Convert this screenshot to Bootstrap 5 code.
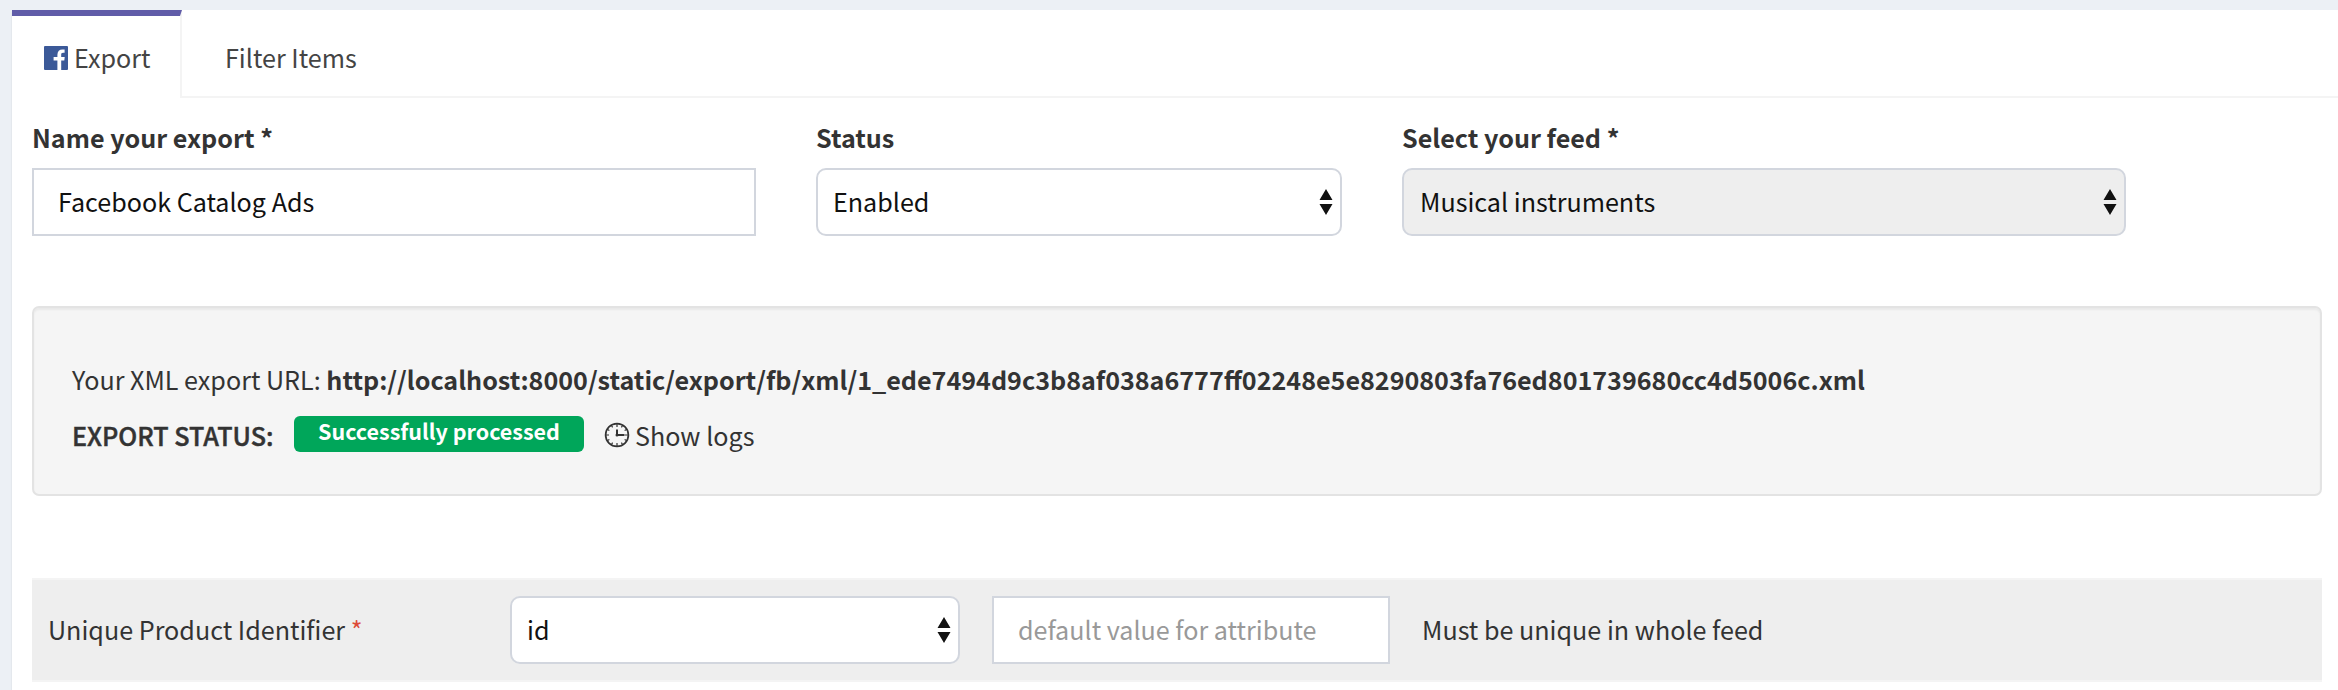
<!DOCTYPE html>
<html lang="en">
<head>
<meta charset="utf-8">
<title>Export</title>
<link href="https://cdn.jsdelivr.net/npm/bootstrap@5.3.0/dist/css/bootstrap.min.css" rel="stylesheet">
<style>
body{background:#ecf0f5;color:#333;font-family:"Noto Sans CJK SC",sans-serif;font-size:25.14px;line-height:40px;overflow:hidden}
.panel{margin:10px 0 0 12px;height:700px;background:#fff;box-shadow:0 2px 2px rgba(0,0,0,.1)}
.export-tabs{height:88px;border-bottom:2px solid #f4f4f4}
.export-tabs .nav-link{height:88px;color:#444;border:0;border-top:6px solid transparent;border-radius:0;padding:21px 32px 0;line-height:40px}
.export-tabs .nav-link.active{width:170px;border-top-color:#605ca8;border-right:2px solid #f4f4f4;background:#fff;padding:21px 0 0 32px}
.export-tabs .filter-tab{padding-left:43px}
.tab-label{height:40px}
.fb-icon{width:24px;height:24px;margin-right:6px;margin-top:1px}
.panel-body{padding:19px 16px 0 20px}
.form-label{display:block;margin:0 0 11px;font-weight:700}
.form-control,.form-select{height:68px;border:2px solid #d2d6de;color:#111;font-size:inherit;line-height:40px;box-shadow:none}
.form-control{border-radius:0;padding:11px 24px 13px}
.form-control::placeholder{color:#999;opacity:1}
.form-select{border-radius:10px;padding:11px 40px 13px 15px;background:#fff url("data:image/svg+xml,%3Csvg xmlns='http://www.w3.org/2000/svg' width='14' height='26'%3E%3Cpath d='M7 0l6.5 11H.5zM.5 15h13L7 26z' fill='%23111'/%3E%3C/svg%3E") no-repeat right 7px center/14px 26px}
.form-select:disabled{background-color:#eee;color:#111;opacity:1;padding-left:16px}
.fields{gap:60px}
.w-name{width:724px}.w-status{width:526px}
.url-well{margin-top:70px;height:190px;padding:51px 38px 0;background:#f5f5f5;border:2px solid #e3e3e3;border-radius:7px;box-shadow:inset 0 2px 2px rgba(0,0,0,.05)}
.status-row{margin-top:16px}
.status-title{font-weight:500;-webkit-text-stroke:.45px #333;width:222px}
.status-badge{width:290px;height:36px;margin-top:-3px;padding:0;border-radius:6px;background:#00a65a;font-size:21.5px;font-weight:700;line-height:30px;color:#fff}
.clock{width:26px;height:26px;margin:0 5px 0 20px}
.attr-row{margin-top:82px;height:104px;background:#eee;border-top:2px solid #f4f4f4;border-bottom:2px solid #f4f4f4}
.attr-text{padding-bottom:2px}
.attr-name{width:478px;padding-left:16px}
.w-attr{width:450px}.w-default{width:398px;margin:0 32px}
.req{color:#dd4b39}
</style>
</head>
<body>
<main class="panel">
  <nav class="nav export-tabs flex-nowrap">
    <a class="nav-link active d-flex text-nowrap" href="#"><span class="tab-label d-flex align-items-center"><svg class="fb-icon" viewBox="0 0 24 24"><rect width="24" height="24" rx="1" fill="#3b5998"/><path d="M13.4 24v-9.4H9.6V11h3.800V8.700c0-3.500 2-5.200 5-5.200h2.200v3.200h-1.500c-1.500 0-1.900.7-1.900 1.900V11h3.500l-.4 3.600h-3.100V24z" fill="#fff"/></svg>Export</span></a>
    <a class="nav-link filter-tab" href="#">Filter Items</a>
  </nav>
  <div class="panel-body">
    <div class="d-flex fields">
      <div class="w-name"><label class="form-label" for="name">Name your export *</label><input id="name" class="form-control" value="Facebook Catalog Ads"></div>
      <div class="w-status"><label class="form-label" for="status">Status</label><select id="status" class="form-select"><option>Enabled</option></select></div>
      <div class="w-name"><label class="form-label" for="feed">Select your feed *</label><select id="feed" class="form-select" disabled><option>Musical instruments</option></select></div>
    </div>
    <section class="url-well">
      <div class="text-nowrap">Your XML export URL: <b>http://localhost:8000/static/export/fb/xml/1_ede7494d9c3b8af038a6777ff02248e5e8290803fa76ed801739680cc4d5006c.xml</b></div>
      <div class="status-row d-flex align-items-center">
        <span class="status-title text-nowrap">EXPORT STATUS:</span>
        <span class="badge status-badge">Successfully processed</span>
        <svg class="clock" viewBox="0 0 26 26" fill="none" stroke="#333"><circle cx="13" cy="13" r="11.4" stroke-width="1.7"/><path d="M13 7.5V13h7.5" stroke-width="2"/><circle cx="13" cy="13" r="1.5" fill="#333" stroke="none"/><g stroke-width="1.2"><path d="M13 2v3M13 21v3M2 13h3M21 13h3"/><path d="M13 2v2.2M13 21.8V24M2 13h2.2M21.8 13H24" transform="rotate(30 13 13)"/><path d="M13 2v2.2M13 21.8V24M2 13h2.2M21.8 13H24" transform="rotate(60 13 13)"/></g></svg>
        <span>Show logs</span>
      </div>
    </section>
    <section class="attr-row d-flex align-items-center">
      <div class="attr-text attr-name">Unique Product Identifier <span class="req">*</span></div>
      <select class="form-select w-attr" aria-label="Attribute"><option>id</option></select>
      <input class="form-control w-default" placeholder="default value for attribute">
      <div class="attr-text">Must be unique in whole feed</div>
    </section>
  </div>
</main>
<script src="https://cdn.jsdelivr.net/npm/bootstrap@5.3.0/dist/js/bootstrap.bundle.min.js"></script>
</body>
</html>
